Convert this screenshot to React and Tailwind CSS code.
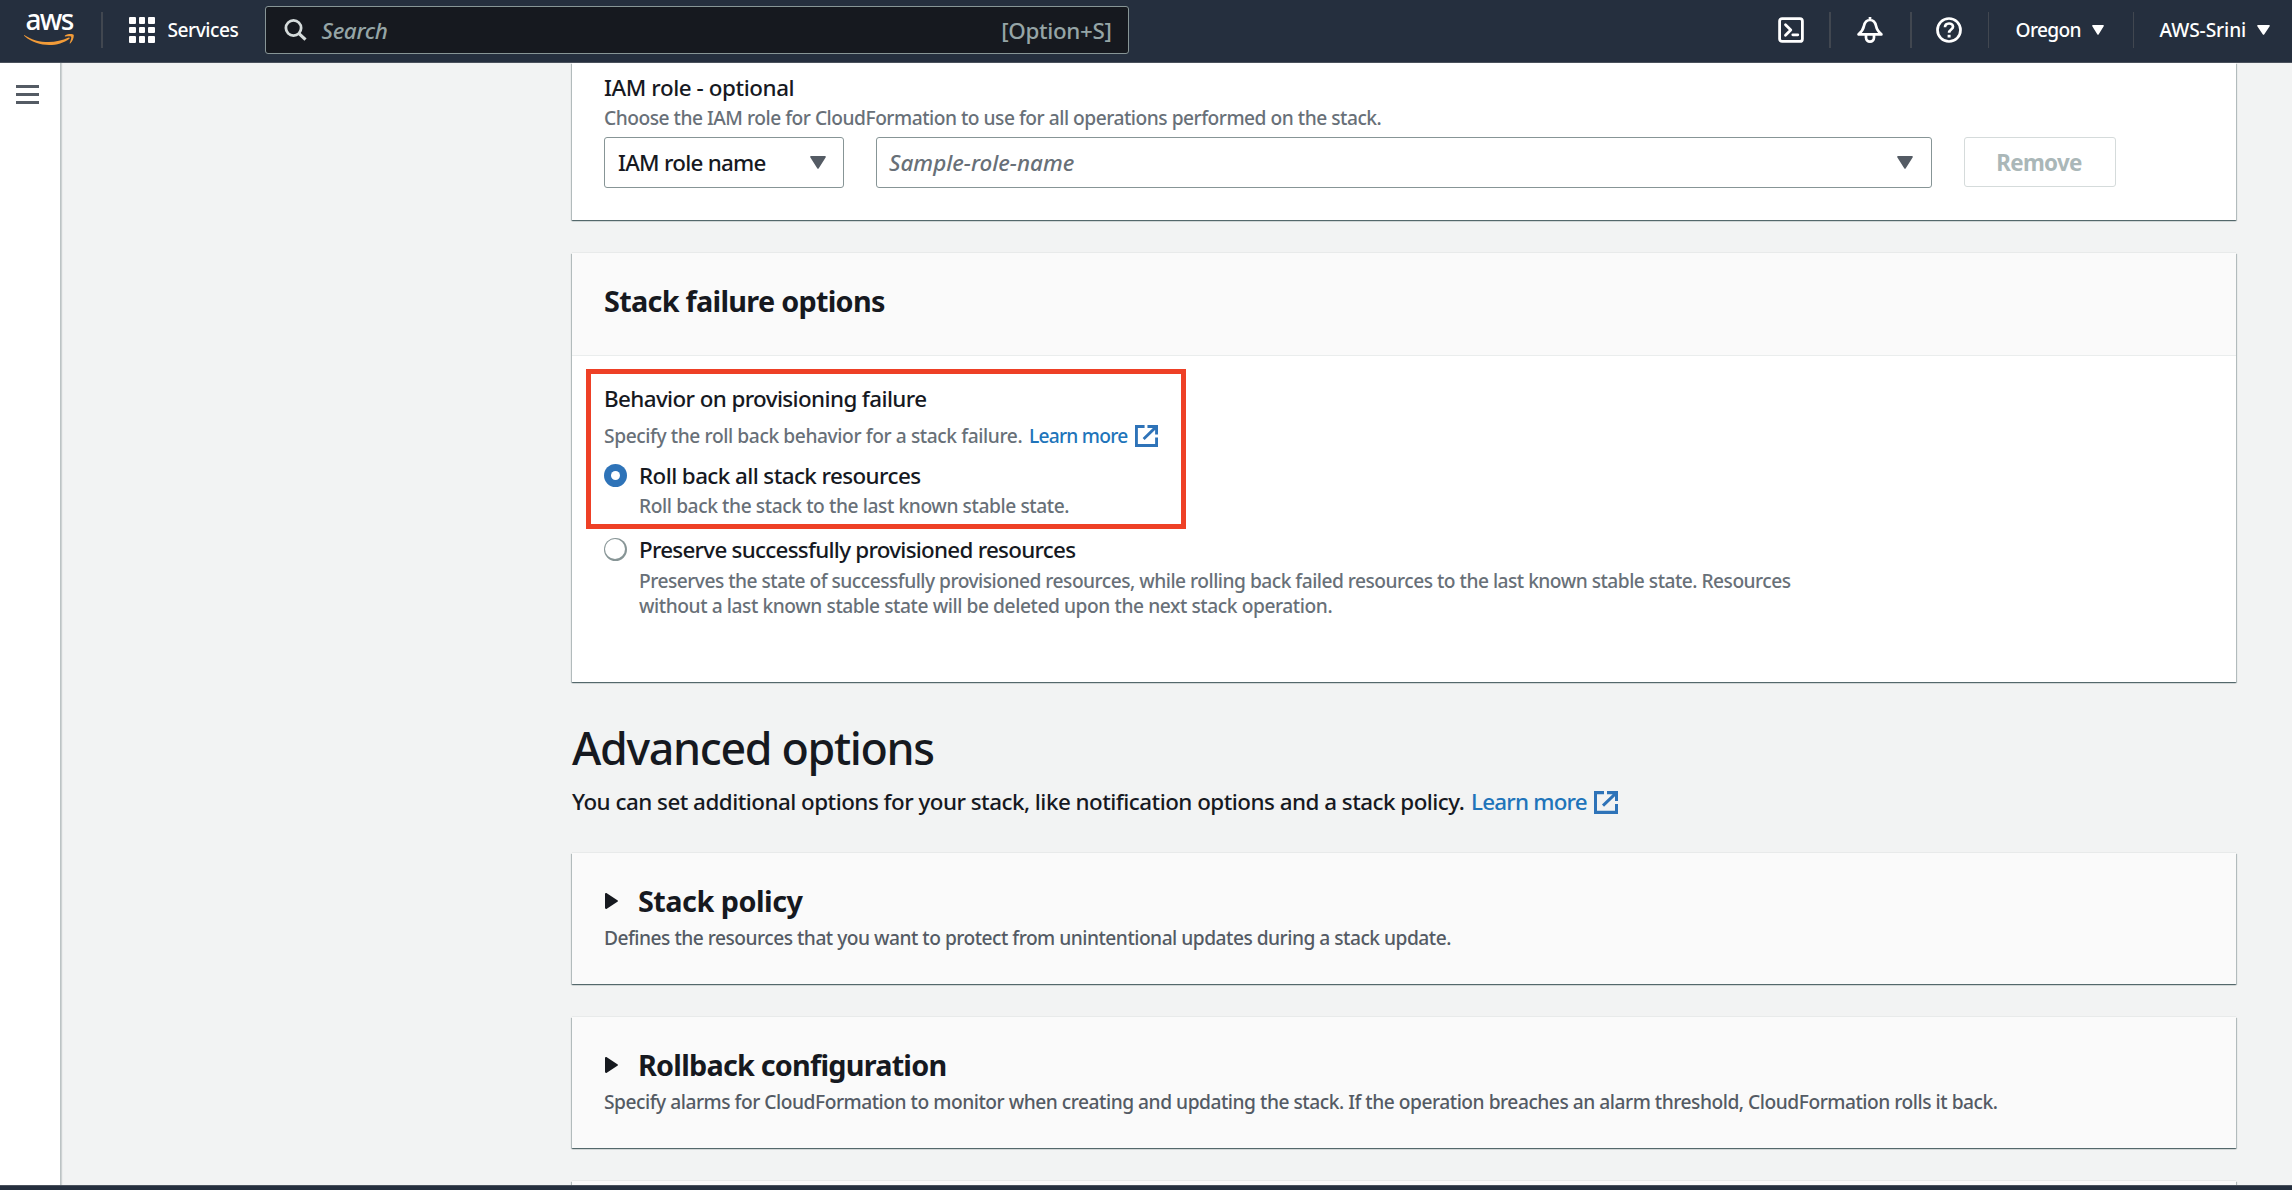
const body = "text-[22.4px] leading-8";
const small = "text-[19.2px]";
const panel =
  "w-[1664px] shadow-[0_1px_1px_0_rgba(0,28,36,0.45),1px_1px_1px_0_rgba(0,28,36,0.2),-1px_1px_1px_0_rgba(0,28,36,0.2),0_-1px_0_0_#e8eaea]";

function Caret({ className }) {
  return (
    <svg viewBox="0 0 16 13" preserveAspectRatio="none" className={className} fill="currentColor">
      <path d="M1.2 0h13.6c.9 0 1.3.9.8 1.6L8.8 12.2c-.4.7-1.2.7-1.6 0L.4 1.600C-.1.900.300 0 1.200 0z" />
    </svg>
  );
}

function External({ className }) {
  return (
    <svg viewBox="0 0 24 22" preserveAspectRatio="none" className={className} fill="none" stroke="currentColor" strokeWidth="3">
      <path d="M10 1.500H1.500v19h21v-8" />
      <path d="M13 1.500h9.500v8M22.300 1.700L9 14" />
    </svg>
  );
}

function Divider({ className }) {
  return <div className={`h-9 shrink-0 bg-[#414750] ${className}`} />;
}

function Header() {
  return (
    <header className="flex h-[63px] shrink-0 items-start border-b border-[#4a515c] bg-[#252f3e] text-white">
      <div className="ml-6 flex w-[50px] flex-col items-center">
        <span className="mt-1 h-[30px] text-[28px] leading-[30px] tracking-[-1.700px]">aws</span>
        <svg viewBox="0 0 50 12" className="h-3 w-[50px]">
          <path d="M.6 1.200C13 9.500 31 10.300 44.600 3.600c1-.4 1.700.5.8 1.200C34 13.600 13.500 13.600.4 2.100-.2 1.400.1.900.6 1.200z" fill="#f29b38" />
          <path d="M41 1.500c3-2 8-1.600 8.600-.8.6.9-.3 6-3.200 8.600-.5.4-1 .2-.7-.4.7-1.700 2-5.200 1.400-6.100-.7-.9-4-.5-5.700-.3-.6 0-.8-.6-.4-1z" fill="#f29b38" />
        </svg>
      </div>
      <Divider className="mt-3 ml-[27px] w-0.5" />
      <div className="mt-[17px] ml-[26px] grid grid-cols-3 gap-x-[3px] gap-y-[3px]">
        {Array.from({ length: 9 }, (_, i) => (
          <span key={i} className="h-[6.600px] w-[6.500px] rounded-[1px] bg-white" />
        ))}
      </div>
      <span className={`${small} mt-4 ml-[13px] w-[72px] leading-7 tracking-[-0.500px]`}>Services</span>
      <div className="mt-1.5 ml-[25px] flex h-12 w-[864px] items-center rounded-[3px] border border-[#879596] bg-[#16191f]">
        <svg viewBox="0 0 23 22" className="ml-[18px] h-[22px] w-[23px]" fill="none" stroke="#d5dbdb">
          <circle cx="9.500" cy="9" r="7.600" strokeWidth="2.800" />
          <path d="M14.500 14.200l7 6.500" strokeWidth="3.200" />
        </svg>
        <span className={`${body} mt-0.5 ml-[15px] tracking-[-0.333px] text-[#95a5a6] italic`}>Search</span>
        <span className={`${body} mt-0.5 mr-4 ml-auto tracking-[-0.350px] text-[#95a5a6]`}>[Option+S]</span>
      </div>
      <svg viewBox="0 0 26 26" className="mt-[17px] ml-[649px] size-[26px] shrink-0" fill="none" stroke="white" strokeWidth="2.800" strokeLinejoin="round">
        <rect x="1.600" y="1.600" width="22.800" height="22.800" rx="2.500" />
        <path d="M7.500 7.800l5.300 5.200-5.300 5.200M14.800 17.800h5" strokeLinecap="round" />
      </svg>
      <Divider className="mt-3 ml-[25px] w-0.5" />
      <svg viewBox="0 0 26 26" className="mt-[17px] ml-[26px] size-[26px] shrink-0" fill="none" stroke="white" strokeWidth="2.700" strokeLinejoin="round">
        <path d="M13 0v3M1.600 17.400h22.800c-3.200-2.600-4.600-4.600-5.400-8.600C18.200 5 16 3 13 3S7.800 5 7 8.800c-.8 4-2.200 6-5.400 8.600z" />
        <path d="M9 18v2.600a4 4 0 0 0 8 0V18" />
      </svg>
      <Divider className="mt-3 ml-[27px] w-0.5" />
      <svg viewBox="0 0 26 26" className="mt-[17px] ml-6 size-[26px] shrink-0" fill="none" stroke="white" strokeWidth="2.700">
        <circle cx="13" cy="13" r="11.500" />
        <path d="M9 10.300c0-5 8-5 8-.5 0 2.800-3.900 2.700-3.900 6" />
        <path d="M13.100 17.800v2.700" strokeWidth="3" />
      </svg>
      <Divider className="mt-3 ml-[26px] w-px" />
      <span className={`${small} mt-4 ml-[27px] w-[67px] leading-7 tracking-[-0.660px]`}>Oregon</span>
      <Caret className="mt-[25px] ml-[9px] h-[10px] w-3" />
      <Divider className="mt-3 ml-[29px] w-px" />
      <span className={`${small} mt-4 ml-[26px] w-[88px] leading-7 whitespace-nowrap tracking-[-0.110px]`}>AWS-Srini</span>
      <Caret className="mt-[25px] ml-[9px] h-[10px] w-[13px]" />
    </header>
  );
}

function RolePanel() {
  return (
    <section className={`${panel} h-[157px] bg-white pt-[9px] pl-8`}>
      <h3 className={`${body} tracking-[-0.421px]`}>IAM role - optional</h3>
      <p className={`${small} leading-7 tracking-[-0.489px] text-[#687078]`}>
        Choose the IAM role for CloudFormation to use for all operations performed on the stack.
      </p>
      <div className="mt-[5px] flex">
        <div className="flex h-[51px] w-[240px] items-center rounded-[3px] border border-[#879596] bg-white pr-[17px] pl-[13px]">
          <span className={`${body} tracking-[-0.740px]`}>IAM role name</span>
          <Caret className="ml-auto h-[13px] w-4 text-[#545b64]" />
        </div>
        <div className="ml-8 flex h-[51px] w-[1056px] items-center rounded-[3px] border border-[#879596] bg-white pr-[18px] pl-3">
          <span className={`${body} tracking-[0px] text-[#687078] italic`}>Sample-role-name</span>
          <Caret className="ml-auto h-[13px] w-4 text-[#545b64]" />
        </div>
        <button className={`${body} ml-8 h-[50px] w-[152px] rounded-[3px] border border-[#d5dbdb] pt-px pr-0.5 font-bold tracking-[-0.700px] text-[#aab7b8]`}>
          Remove
        </button>
      </div>
    </section>
  );
}

function FailurePanel() {
  return (
    <section className={`${panel} relative mt-[33px] h-[429px] bg-white`}>
      <div className="h-[103px] border-b border-[#eaeded] bg-[#fafafa] pt-7 pl-8">
        <h2 className="text-[28.800px] leading-10 font-bold tracking-[-0.710px]">Stack failure options</h2>
      </div>
      <div className="pt-[27px] pl-8">
        <h3 className={`${body} tracking-[-0.610px]`}>Behavior on provisioning failure</h3>
        <p className={`${small} mt-[7px] flex leading-7 text-[#687078]`}>
          <span className="w-[425px] tracking-[-0.405px]">Specify the roll back behavior for a stack failure.</span>
          <a className="tracking-[-0.750px] text-[#2074ba]">Learn more</a>
          <External className="mt-[3px] ml-[7px] h-[22px] w-[23px] text-[#2e73b8]" />
        </p>
        <div className="mt-2.5 flex">
          <span className="mt-1 mr-[12.500px] flex size-[22.500px] items-center justify-center rounded-full bg-[#2e73b8]">
            <span className="size-[9px] rounded-full bg-white" />
          </span>
          <div>
            <div className={`${body} tracking-[-0.580px]`}>Roll back all stack resources</div>
            <div className={`${small} leading-7 tracking-[-0.412px] text-[#687078]`}>Roll back the stack to the last known stable state.</div>
          </div>
        </div>
        <div className="mt-3.5 flex">
          <span className="mt-1 mr-[12.500px] flex size-[22.500px] items-center justify-center rounded-full bg-[#879596]">
            <span className="size-[19.700px] rounded-full bg-white" />
          </span>
          <div>
            <div className={`${body} tracking-[-0.735px]`}>Preserve successfully provisioned resources</div>
            <div className={`${small} mt-0.5 leading-[25px] whitespace-nowrap text-[#687078]`}>
              <span className="tracking-[-0.512px]">
                Preserves the state of successfully provisioned resources, while rolling back failed resources to the last known stable state. Resources
              </span>
              <br />
              <span className="tracking-[-0.430px]">without a last known stable state will be deleted upon the next stack operation.</span>
            </div>
          </div>
        </div>
      </div>
      <div className="absolute top-[116px] left-[14px] h-[160px] w-[600px] border-5 border-[#ee4026]" />
    </section>
  );
}

function Expandable({ title, titleClass, children, textClass }) {
  return (
    <section className={`${panel} mb-[33px] h-[131px] shrink-0 bg-[#fafafa] pt-7 pl-8`}>
      <h2 className="flex items-center text-[28.800px] leading-10 font-bold">
        <svg viewBox="0 0 13 16" className="mr-5 ml-px h-4 w-[13px]" fill="currentColor">
          <path d="M0 1.200C0 .2 1 -.3 1.800.3l10.600 6.900c.7.400.7 1.200 0 1.600L1.800 15.700C1 16.300 0 15.800 0 14.800z" />
        </svg>
        <span className={titleClass}>{title}</span>
      </h2>
      <p className={`${small} mt-[3px] leading-7 whitespace-nowrap text-[#545b64] ${textClass}`}>{children}</p>
    </section>
  );
}

export default function App() {
  return (
    <div className="flex h-[1190px] w-[2292px] flex-col overflow-hidden bg-[#f2f3f3] font-['Noto_Sans',sans-serif] text-[#16191f]">
      <div className="flex h-full flex-col font-medium">
        <Header />
        <div className="flex h-[1122px] shrink-0 overflow-hidden">
          <nav className="w-[61px] shrink-0 border-r border-[#bcc3c4] bg-white pt-[22px] pl-4 shadow-[1px_0_1px_0_rgba(0,28,36,0.15)]">
            <div className="flex w-[22.500px] flex-col gap-[5px]">
              <span className="h-[3px] bg-[#545b64]" />
              <span className="h-[3px] bg-[#545b64]" />
              <span className="h-[3px] bg-[#545b64]" />
            </div>
          </nav>
          <main className="ml-[511px]">
            <RolePanel />
            <FailurePanel />
            <h1 className="mt-9 text-[44.800px] leading-[60px] font-medium tracking-[-1.340px]">Advanced options</h1>
            <p className={`${body} mt-2 mb-[35px] flex`}>
              <span className="w-[899px] tracking-[-0.515px]">
                You can set additional options for your stack, like notification options and a stack policy.
              </span>
              <a className="tracking-[-0.780px] text-[#2074ba]">Learn more</a>
              <External className="mt-[5px] ml-[7px] h-[23px] w-6 text-[#2e73b8]" />
            </p>
            <Expandable title="Stack policy" titleClass="tracking-[-0.500px]" textClass="tracking-[-0.505px]">
              Defines the resources that you want to protect from unintentional updates during a stack update.
            </Expandable>
            <Expandable title="Rollback configuration" titleClass="tracking-[-0.770px]" textClass="tracking-[-0.478px]">
              Specify alarms for CloudFormation to monitor when creating and updating the stack. If the operation breaches an alarm threshold, CloudFormation rolls it back.
            </Expandable>
            <section className={`${panel} h-10 bg-[#fafafa]`} />
          </main>
        </div>
        <footer className="h-[5px] shrink-0 border-t border-[#4a515c] bg-[#252f3e]" />
      </div>
    </div>
  );
}
